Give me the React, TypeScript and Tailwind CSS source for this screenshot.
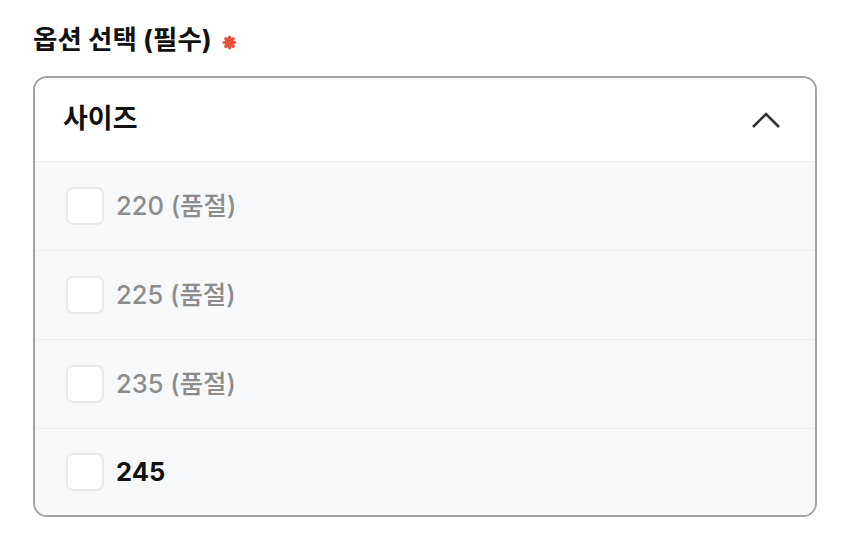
import { useState } from "react";

const options = [
  { label: "220 (품절)", soldOut: true },
  { label: "225 (품절)", soldOut: true },
  { label: "235 (품절)", soldOut: true },
  { label: "245", soldOut: false },
];

function RequiredMark() {
  return (
    <svg width="15" height="15" viewBox="0 0 14 14" className="ml-[10px] mt-[4px]">
      <g stroke="#e5533c" strokeWidth="3" strokeLinecap="round">
        <line x1="7" y1="2" x2="7" y2="12" />
        <line x1="2" y1="7" x2="12" y2="7" />
        <line x1="3.5" y1="3.5" x2="10.5" y2="10.5" />
        <line x1="10.5" y1="3.5" x2="3.5" y2="10.5" />
      </g>
    </svg>
  );
}

export default function App() {
  const [open, setOpen] = useState(true);
  const [checked, setChecked] = useState<string[]>([]);

  const toggle = (label: string) =>
    setChecked((prev) =>
      prev.includes(label) ? prev.filter((l) => l !== label) : [...prev, label]
    );

  return (
    <div
      className="min-h-screen bg-white px-[33px] pt-[20px]"
      style={{ fontFamily: 'Inter, "Noto Sans CJK KR", sans-serif' }}
    >
      {/* Label */}
      <div className="flex items-center h-[40px]">
        <span className="text-[26.5px] font-bold text-[#111]">옵션 선택 (필수)</span>
        <RequiredMark />
      </div>

      {/* Select box */}
      <div className="mt-[16px] w-[784px] border-2 border-[#a3a3a3] rounded-[14px] overflow-hidden">
        <button
          className="w-full h-[84px] flex items-center justify-between pl-[28px] pr-[34px] bg-white border-b border-[#e9eaec]"
          onClick={() => setOpen(!open)}
        >
          <span className="text-[27px] font-bold text-[#111]">사이즈</span>
          <svg width="30" height="18" viewBox="0 0 30 18" fill="none">
            <path
              d={open ? "M2 16L15 3L28 16" : "M2 3L15 16L28 3"}
              stroke="#333"
              strokeWidth="2.6"
            />
          </svg>
        </button>

        {open && (
          <div className="bg-[#f7f8fa]">
            {options.map((o, i) => (
              <label
                key={o.label}
                className={`flex items-center pl-[31px] gap-[12px] ${
                  i < options.length - 1 ? "h-[89px] border-b border-[#eceef1]" : "h-[86px]"
                }`}
              >
                <input
                  type="checkbox"
                  disabled={o.soldOut}
                  checked={checked.includes(o.label)}
                  onChange={() => toggle(o.label)}
                  className="appearance-none w-[38px] h-[38px] rounded-[7px] border-2 border-[#e8e9eb] bg-white"
                />
                <span
                  className={`text-[25.5px] ${
                    o.soldOut ? "text-[#8c8c8c] font-medium" : "text-[#111] font-bold"
                  }`}
                >
                  {o.label}
                </span>
              </label>
            ))}
          </div>
        )}
      </div>
    </div>
  );
}
